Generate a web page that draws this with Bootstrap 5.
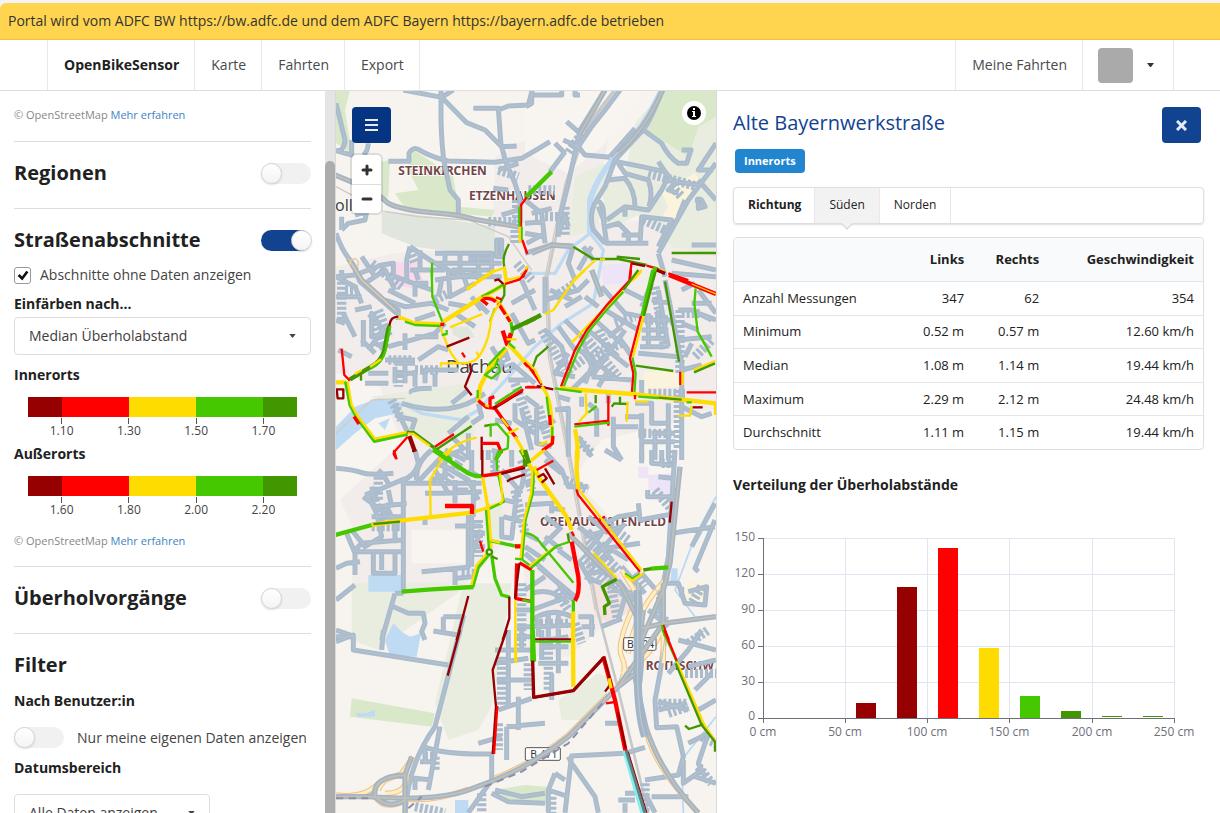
<!DOCTYPE html>
<html lang="de">
<head>
<meta charset="utf-8">
<meta name="viewport" content="width=device-width, initial-scale=1">
<title>OpenBikeSensor Portal</title>
<link href="https://cdn.jsdelivr.net/npm/bootstrap@5.3.0/dist/css/bootstrap.min.css" rel="stylesheet">
<style>
:root{--obs-blue:#114391;--line:#dededf;--ink:#212121;--c1:#960000;--c2:#ff0000;--c3:#ffdc00;--c4:#45c800;--c5:#429600}
body{font-family:"Open Sans","Noto Sans",sans-serif;font-size:14px;line-height:20px;color:var(--ink);background:#fff}
.app{height:100vh;overflow:hidden}
.top-strip{background:#f3f4f5;padding-top:3px}
.banner{background:#ffd54f;border-bottom:1px solid #fbc02d;border-top-left-radius:6px;padding:8px 8px;color:#333}
.main-nav{border-bottom:1px solid var(--line);padding:0 46px 0 47px;height:51px}
.main-nav a,.main-nav button{color:#4a4a4a;text-decoration:none;padding:0 15px 0 16px;border:0;border-left:1px solid #e8e8e9;background:none}
.main-nav .last-item{border-right:1px solid #e8e8e9}
.main-nav .brand{color:var(--ink);font-weight:700}
.main-nav .account{padding:0 18px 0 15px;gap:13px}
.avatar{width:35px;height:35px;border-radius:4px;background:#aaa}
.side-panel{width:325px;padding:12px 14px 0;overflow:hidden}
.track{width:11px;background:#e4e4e4;border-right:1px solid #d9d9d9;padding-top:70px}
.thumb{width:10px;background:#acacac;border-radius:5px 5px 0 0}
.attribution{font-size:11px;line-height:24px;color:#888}
.attribution.lower{line-height:22px;margin-top:13px}
.attribution a{color:#4183c4;text-decoration:none}
.rule{height:1px;margin:14px 0 15px;background:var(--line);border:0;opacity:1}
h2{font-size:20px;line-height:32px;font-weight:700;margin:0}
.section-row{margin-bottom:19px}
.field-title{font-size:14px;line-height:20px;font-weight:700;margin:0}
.field-title.spaced{margin-top:10px}
.field-title.tight{margin-top:6px}
.field-title.above-drop{padding-bottom:3px}
.tick-row{padding:9px 0;color:#444}
.tick-box{appearance:none;width:17px;height:17px;border:1px solid #999;border-radius:3px;margin:0 9px 0 0;background:#fff}
.tick-box:checked{background:#fff url("data:image/svg+xml,%3Csvg xmlns='http://www.w3.org/2000/svg' viewBox='0 0 16 16'%3E%3Cpath d='M3 8l4 4 6-8' fill='none' stroke='%23111' stroke-width='3'/%3E%3C/svg%3E") center/14px no-repeat}
.toggle{appearance:none;flex:none;width:50px;height:21px;border-radius:11px;background:#f1f1f1;margin:0;position:relative}
.toggle::before{content:"";position:absolute;left:0;top:0;width:21px;height:21px;border-radius:50%;border:1px solid #d4d4d5;background:linear-gradient(#fff,#f4f4f4);box-shadow:0 1px 2px #22242626}
.toggle:checked{background:var(--obs-blue)}
.toggle:checked::before{left:30px}
.toggle+label{margin-left:13px;color:#444}
.drop{appearance:none;height:38px;border:1px solid var(--line);border-radius:4px;padding:0 14px;color:#3d3d3d;background:#fff url("data:image/svg+xml,%3Csvg xmlns='http://www.w3.org/2000/svg' viewBox='0 0 8 5'%3E%3Cpath d='M0 0h8L4 5z' fill='%23444'/%3E%3C/svg%3E") right 14px center/7px 4px no-repeat}
.drop-range{width:196px}
.legend-bar{height:20px;margin:12px 14px 1px}
.legend-bar span{flex:2}
.legend-bar span:first-child,.legend-bar span:last-child{flex:1}
.scale{margin:0 14px;font-size:12px;line-height:14px;color:#444}
.scale span{flex:1;text-align:center}
.scale span::before{content:"";display:block;width:1px;height:6px;margin:0 auto;background:#555}
.k1{background:var(--c1)}.k2{background:var(--c2)}.k3{background:var(--c3)}.k4{background:var(--c4)}.k5{background:var(--c5)}
.map-pane{min-width:0;background:#f7f4ef;overflow:hidden}
.map-pane svg.map{display:block;width:100%;height:100%}
.square-btn{width:39px;height:36px;border:0;border-radius:4px;background:#053582;padding:0;display:grid;place-items:center}
.square-btn.close-btn{background:var(--obs-blue);margin-right:3px}
.map-tools{left:16px;top:16px}
.zoomer{width:29px;margin-top:12px;border-radius:4px;background:#fff;box-shadow:0 0 0 2px #0000001a}
.zoomer button{width:29px;height:29px;border:0;background:none;padding:0;display:grid;place-items:center}
.zoomer button+button{border-top:1px solid #ddd}
.info-btn{right:10px;top:10px;width:24px;height:24px;border:0;border-radius:50%;background:#fff;padding:0}
.detail{width:504px;border-left:1px solid #d9d9d9;padding:16px;overflow:hidden}
.detail h1{font-size:20px;line-height:32px;font-weight:400;color:var(--obs-blue);margin:0}
.tag{display:inline-block;background:#2185d0;color:#fff;font-size:11px;line-height:24px;font-weight:700;border-radius:4px;padding:0 9px;margin:6px 2px 14px}
.dir-menu{border:1px solid var(--line);border-radius:4px;box-shadow:0 1px 2px #22242626;height:37px;font-size:12px;margin-bottom:13px}
.dir-menu>*{display:flex;align-items:center;border:0;border-right:1px solid #e8e8e9;background:none;padding:0 14px 2px;color:#222}
.dir-menu .lead-item{font-weight:700;padding:0 13px 2px 14px}
.dir-menu .current{background:#f2f2f2;position:relative}
.current::after{content:"";position:absolute;left:50%;bottom:-5px;width:8px;height:8px;margin-left:-4px;background:#f2f2f2;border:solid #d4d4d5;border-width:0 1px 1px 0;transform:rotate(45deg)}
.stats{border:1px solid var(--line);border-radius:4px;overflow:hidden;margin-bottom:25px}
.stats table{width:100%;height:211px;font-size:13px;line-height:18px;border-collapse:separate;border-spacing:0}
.stats th,.stats td{text-align:right;padding:0 9px 1px}
.stats tbody th{text-align:left;font-weight:400}
.stats thead th{background:#f9fafb;height:43px}
.stats tbody>tr>*{border-top:1px solid #e6e6e7}
.chart{display:block;width:100%;margin-top:30px}
.chart text{font-size:12px;fill:#6e7079}
/* map drawing */
.map path,.map circle{fill:none;stroke-linejoin:round}
.map .area path{stroke:none;fill:inherit}
.street-a{stroke:#a9bbcd;stroke-width:15}
.street-b{stroke:#b7c3cc;stroke-width:3}
.comb{stroke:#a9bbcd;stroke-width:28;stroke-dasharray:9 6}
.main-a{stroke:#a4b5c6;stroke-width:16}
.main-b{stroke:#c5c0b4;stroke-width:5}
.halo{stroke:#f3bf83;stroke-width:16}
.halo-in{stroke:#fdeec4;stroke-width:10}
.dr{stroke:#960000}.rd{stroke:#f00}.ye{stroke:#ffdc00}.gr{stroke:#45c800}.dg{stroke:#429600}
.w6{stroke-width:7}.w9{stroke-width:10}.w13{stroke-width:13}
.place{font:700 36px "Noto Sans",sans-serif;fill:#744549;stroke:#fff;stroke-width:5px;paint-order:stroke}
.town{font:400 56px "Noto Sans",sans-serif;fill:#444;stroke:#fff;stroke-width:4px;paint-order:stroke}
.town.minor{font-size:48px}
.shield{font:400 31px "Noto Sans",sans-serif;fill:#333}
</style>
</head>
<body>
<div class="app d-flex flex-column">
<header class="flex-shrink-0">
  <div class="top-strip"><div class="banner">Portal wird vom ADFC BW https://bw.adfc.de und dem ADFC Bayern https://bayern.adfc.de betrieben</div></div>
  <nav class="main-nav d-flex">
    <a class="brand d-flex align-items-center" href="#">OpenBikeSensor</a>
    <a class="d-flex align-items-center" href="#">Karte</a>
    <a class="d-flex align-items-center" href="#">Fahrten</a>
    <a class="last-item d-flex align-items-center" href="#">Export</a>
    <a class="ms-auto d-flex align-items-center" href="#">Meine Fahrten</a>
    <button class="account last-item d-flex align-items-center" aria-label="Konto"><span class="avatar"></span><svg width="9" height="5" viewBox="0 0 9 5"><path d="M1 0h7L5 4H4z" fill="#333"/></svg></button>
  </nav>
</header>
<main class="d-flex flex-grow-1 overflow-hidden">
  <aside class="side-panel flex-shrink-0">
    <div class="attribution">© OpenStreetMap <a href="#">Mehr erfahren</a></div>
    <hr class="rule">
    <div class="section-row d-flex justify-content-between align-items-center"><h2><label for="t1">Regionen</label></h2><input class="toggle" type="checkbox" id="t1"></div>
    <hr class="rule">
    <div class="d-flex justify-content-between align-items-center"><h2><label for="t2">Straßenabschnitte</label></h2><input class="toggle" type="checkbox" id="t2" checked></div>
    <div class="tick-row d-flex align-items-center"><input class="tick-box" type="checkbox" id="c1" checked><label for="c1">Abschnitte ohne Daten anzeigen</label></div>
    <label class="field-title above-drop d-block" for="s1">Einfärben nach...</label>
    <select class="drop d-block w-100" id="s1"><option>Median Überholabstand</option></select>
    <h3 class="field-title spaced">Innerorts</h3>
    <div class="legend-bar d-flex"><span class="k1"></span><span class="k2"></span><span class="k3"></span><span class="k4"></span><span class="k5"></span></div>
    <div class="scale d-flex"><span>1.10</span><span>1.30</span><span>1.50</span><span>1.70</span></div>
    <h3 class="field-title tight">Außerorts</h3>
    <div class="legend-bar d-flex"><span class="k1"></span><span class="k2"></span><span class="k3"></span><span class="k4"></span><span class="k5"></span></div>
    <div class="scale d-flex"><span>1.60</span><span>1.80</span><span>2.00</span><span>2.20</span></div>
    <div class="attribution lower">© OpenStreetMap <a href="#">Mehr erfahren</a></div>
    <hr class="rule">
    <div class="section-row d-flex justify-content-between align-items-center"><h2><label for="t3">Überholvorgänge</label></h2><input class="toggle" type="checkbox" id="t3"></div>
    <hr class="rule">
    <h2>Filter</h2>
    <h3 class="field-title spaced">Nach Benutzer:in</h3>
    <div class="d-flex align-items-center mt-3"><input class="toggle" type="checkbox" id="t4"><label for="t4">Nur meine eigenen Daten anzeigen</label></div>
    <label class="field-title spaced d-block" for="s2">Datumsbereich</label>
    <select class="drop drop-range d-block mt-3" id="s2"><option>Alle Daten anzeigen</option></select>
  </aside>
  <div class="track flex-shrink-0 d-flex"><div class="thumb"></div></div>
  <section class="map-pane flex-grow-1 position-relative" aria-label="Karte">
<svg class="map" viewBox="3 3 1140 2166" preserveAspectRatio="xMidYMid slice">
<defs>
<g id="streets">
<path d="M3 40Q20 110 30 150Q28 185 3 182L50 195V150M100 160Q98 185 85 195M160 214H222V190Q235 165 258 183Q300 205 340 213L480 217 560 205 600 182 645 155M205 0L320 22 395 98 450 120 500 170 512 215 540 280 555 330V400M320 22L355 0M318 0V90Q320 170 328 220L345 300 370 330V378M415 55H490L498 165M490 60L520 48 580 45 592 0M3 430Q20 480 45 510L65 540M20 420L40 400 90 390 95 365 60 375M20 380V420M500 170L545 168M490 240L550 220M500 375L550 360M475 295L520 300M3 560L60 555 140 525 175 520V560M225 470L215 510V570M225 470L300 520 380 560M300 490H470V540M330 490V530M375 490V550M430 490V570M300 520H500M485 450H500V500H485ZM340 560H500M20 540V570M80 500L120 560M225 540H330M400 505H470M255 480V540M350 540H470"/>
<g transform="translate(570 0)"><path d="M3 50L20 40V0M20 15H110V0M150 0V15H165M240 0L165 120 130 280 100 400V440M285 0L240 60 200 110 160 170 180 195 255 202M120 185L75 245M90 160L120 190M125 95L165 130M115 150L160 170M412 0Q370 110 345 130L270 210 240 290 215 330Q190 370 205 420L240 460M330 115L255 200M355 120L410 160Q430 200 460 220H485L498 180H470M275 215L350 230 420 245 440 270M280 220L300 250 370 270Q385 310 372 350M250 270L300 265Q330 300 330 350M215 330Q240 340 235 390L245 460H370M245 390L300 350 370 360 410 300 425 270M345 460L350 380 440 390 400 470M573 160L520 240H565M573 220L490 330 400 490M520 270L573 330M420 270L520 285M460 270L430 300 460 310M245 410L280 400 310 430V460M290 435H345M400 215L430 260M520 340Q510 320 530 330L540 350 520 355ZM0 490L80 465 145 468M100 430L120 380 130 410M0 430L60 440M0 330L50 370 60 460M20 370L80 355M145 470L130 520 150 570M175 470L205 510M440 510L573 540M500 465H573M440 550L573 560M400 490L420 560M0 400L60 395M5 460L60 430M300 380V350M220 350L240 400M160 540L200 470M480 330L460 380"/></g>
<g transform="translate(0 540)"><path d="M60 0L75 35 185 130M3 20L60 50 80 100M90 40L150 0 180 60M150 90L210 110 290 100 340 120M240 80V40H280M180 20L290 60M340 0L345 80 420 40M380 0L400 60M300 30L440 10M410 80L440 120M340 100L400 110M3 80H80M110 130L150 190 110 200ZM100 240L150 170M150 270H240M160 230L300 190 330 160M180 290V340M210 270V340M180 310H240M240 300V350M90 340H160M100 310H160M230 370Q220 355 290 355M270 340V300H370M300 310V350M250 270L310 230 340 240M240 200H310M210 190V240M180 400L190 440 240 450 230 480M200 400Q330 440 420 390L450 370M430 400L440 440 410 460M400 440L340 490M470 230L500 280 480 330M510 240L520 270M360 130L420 170M420 90L460 130M530 100L600 60M560 30L600 120M530 130L580 220 600 210M540 400V450L600 490M560 420L590 540M350 400L400 360M200 450L220 490M480 450L530 460M400 490V570M350 500L390 540M330 540L390 570M460 540V570M530 280L600 340M520 330L580 330M120 220L150 235M25 130L60 200M10 240L50 260M3 150L30 160M85 150V230M60 120L110 110M190 150V120L170 110M310 80L320 30M160 60L240 100M240 0L250 30M80 210L120 250M240 150L300 130M180 280H240"/></g>
<g transform="translate(570 540)"><path d="M60 20V130M75 60L140 90M60 90L160 60 190 30M230 50L300 130 350 140M240 120L340 180M190 180L280 260M210 150L300 230 320 260M150 230L230 290 280 330M170 200L200 290 180 340M230 270L140 360M300 180L200 320M250 200L290 170M100 170L150 240M120 150L180 210M60 180L110 230 130 300M130 250L90 310 150 320M200 320L320 330M260 250L310 290M350 150H450M350 180H430M350 205H430M345 230H420M400 60L430 230M380 90L440 100M420 30L470 280V570M460 120H500L560 150M470 160L520 180M500 220L480 260M470 300L530 285M460 210L560 200M340 250L460 260M330 400H380V460H430M350 430V570M260 470H340M265 440V530L290 570M380 490H450M350 515H450M390 480V570M430 400V570M300 440H350M170 380V410M190 400L215 420V500M160 500L200 560M35 420V520L80 530M0 450L60 470M45 480L90 450M100 380L135 390M90 420L130 415V560M470 410L530 440 560 430M350 380V330M250 400V360M520 60L573 130M500 100H560M520 130L573 150M180 80L220 110M0 380L40 410M350 110L380 40M300 60L360 90M370 130V230M400 120V200M250 300L220 350M280 200L310 240M120 110L170 80M470 60L510 40"/></g>
<g transform="translate(0 1080)"><path d="M3 55Q60 60 80 68T175 70M240 0L250 40Q240 80 200 90L130 120 90 135M205 85V430M205 100H440M130 60L145 75 160 100M245 90Q240 40 290 0M245 100L320 20M120 150L110 110M100 140L125 190 140 260 90 290 50 240M110 200H200M130 170L215 160M150 160L180 220V280M200 270L80 280 60 300M60 305H200M115 310V370H180V310M140 310V360M35 250L60 310V375M3 355L35 340 75 335M3 450L60 405M180 430L140 570M180 430H205M175 470L220 490H265L270 520 260 545 270 570M295 543L370 555M325 500L385 500 370 560M325 500V550M260 365L400 352V190M360 360V405M365 385L410 380M330 90V20L380 0M330 130L440 125M370 130V120L400 120M360 160V90M400 60L430 80M410 0V70M270 200V225M360 228H440M410 200V350M400 250H450M440 240L400 330M500 200V260L530 265 545 130 560 110 570 60M505 200L560 215M510 150L550 160M500 60L560 130M530 0V50M570 100L600 90M470 0L500 10M545 530H600M540 480H590M545 560H600M480 0V60M330 50L400 90 430 150M340 70L290 90M3 560H60M160 120L170 170M300 60L340 130M300 40L360 60M85 140L150 190M415 90V200M270 130H330M420 290H450"/></g>
<g transform="translate(570 1080)"><path d="M60 5L110 60 130 110 190 110M60 30L110 70M240 0L290 30M350 0V40M380 0V40L440 45M410 0V40M400 80L440 85M368 120V140H440M340 160L345 210 450 190M450 0L430 320 415 400M440 250L570 230M570 160L500 290M570 210L510 355 520 365M425 400H460L480 460 540 465 545 410 490 425M470 410V440M190 240L260 330M210 300L345 280M200 330L300 220M180 260L290 230M170 290L250 380M200 350L260 300M230 280L310 330M190 200L250 250M190 370L270 360M160 230L200 260M0 165L80 160V190M80 175L120 180M0 290L60 330M0 310L90 390 150 440M40 350L100 400Q120 440 150 450M50 290L110 230M0 420L60 380M20 430Q80 410 130 460M20 480L130 440M20 510Q80 470 140 500M30 530L140 525M40 500V560M70 490V560M100 490V560M160 500H200V560M170 530H210M250 400L300 440 280 510 230 530M260 420L330 430M350 370L410 440V520M290 350L360 430M370 480L430 530M400 440L420 570M0 250L40 270M100 300L140 330M180 380L230 400M280 390L340 470 350 570M20 130H70M60 200L100 230M220 230L280 200 340 190M190 300L230 250M160 330L200 400M60 260L110 300"/></g>
<g transform="translate(0 1620)"><path d="M3 35L55 15V60L340 105M140 60L145 0M375 0L340 137 300 290Q220 400 210 548M315 290L280 480M265 350Q330 375 470 372V450L400 548M270 400V360M240 480V445L290 450M255 395H295M490 240L590 205M550 200V300M515 290L630 280M515 290V390M430 340L500 320M480 100L580 85M485 150H590M520 0V230M560 0V60M620 50H700M610 100H700M650 130V210M640 30L700 20M480 480L560 500 630 490M470 490L520 515 630 520M660 430L690 450M700 380L710 400 780 500 790 548M640 480V548M660 430L640 480 700 500M710 375L690 548M705 378L870 370 930 352M810 280H850M930 450L1030 435 1045 380 1025 290 965 293 960 210 975 130 990 20M1045 390V460L1100 420M1060 340L1120 310M1120 310L1090 400 1110 440M1080 440L1143 460M950 500H1060M870 490H900M850 510H900M870 520V548M970 215L1060 240M970 240L1050 220M1080 180L1130 130M1090 240L1143 210M1000 130L1060 60 1100 0M1030 30L1143 60M1060 110L1143 90M930 490L960 548M3 0L60 20M120 470L100 500M480 60H590M620 0V90M670 0V130"/></g>
</g>
<g id="mainroads">
<path d="M0 255L60 280Q130 310 160 340Q200 360 290 368Q360 372 420 388L560 412M40 505L80 570 190 670M590 490L650 465 715 470M810 0L735 130M983 0Q930 120 850 190"/>
<path d="M1035 1130L1005 1420 985 1500 915 1660M700 1330L860 1490 915 1600M985 1480V1620M900 1620L985 1600 1143 1580M910 1480Q930 1700 910 1800Q930 2000 1090 2169M985 1600L850 1790M3 2120H100Q300 2135 400 2100L480 2070Q600 2020 700 1940L850 1790 915 1740M120 2120Q110 2060 210 2055L230 2000M210 2055V2169M120 2120Q160 2160 210 2130M925 1560L900 1760 930 1900M770 540L800 620"/>
</g>
</defs>
<g class="area" fill="#f2edea"><path d="M3 530L170 490 470 470 480 200 620 120 690 0H850L770 400 1143 380V960L1020 980 940 1200 930 1500 700 1700H580L560 1300 380 1500H50L60 1330 3 1200Z"/></g>
<g class="area" fill="#f8f5f0"><path d="M570 60L700 0H940L800 170 700 250 570 190ZM3 850L130 880 200 1060 3 1240ZM700 1180L800 1050 1020 1000V1460L880 1440 840 1300 730 1180ZM230 1320H390V1420H230ZM410 1480L530 1450 520 1560 400 1570Z"/></g>
<g class="area" fill="#e9ede0"><path d="M985 0H1143V500L1010 470 860 300 900 100ZM720 260L810 220 790 420 700 440ZM790 240L980 300 960 350 820 420ZM50 1480H530L470 1850 430 1920 340 1950 300 1840 380 1500 130 1680 50 1650ZM670 1830L790 1750 840 1770 760 1890 680 1890ZM110 920L390 880 420 1040 260 1060 200 990ZM470 1240H500V1350H460Z"/></g>
<g class="area" fill="#d8e8c9"><path d="M3 0H45L30 60 50 190 3 160ZM985 0H1143V80L1090 110 1060 200 920 110ZM140 215L165 210 160 320 140 330ZM235 180L290 215 355 260 370 350 480 360 470 380 210 355 180 310 250 300 220 240ZM50 1825L300 1870 290 1910 45 1880ZM480 2100L570 2085 635 2090V2145L520 2130Z"/></g>
<g class="area" fill="#e0e5dd"><path d="M140 360L290 380 480 410V490L420 495 240 470 140 430ZM350 710H400L420 740 390 750 355 735Z"/></g>
<g class="area" fill="#fbd8ea"><path d="M180 515H255V545L275 600 170 585Z"/></g>
<g class="area" fill="#ede5f7"><path d="M800 525L880 520V580L805 585ZM910 1130H940V1165H910ZM940 1155L1010 1150V1215L940 1200Z"/></g>
<g class="area" fill="#fbf3dc"><path d="M1080 250L1100 280 1020 390 980 380 1000 350 980 310 1040 270ZM930 845L1035 840V890L915 900ZM1060 1470L1120 1480V1540L1050 1530Z"/></g>
<g class="area" fill="#f4e2de"><path d="M770 1480L850 1450 890 1560 830 1600 780 1580Z"/></g>
<g class="area" fill="#bfdbf3"><path d="M100 1455H205V1505H100ZM175 1600L200 1625 225 1640 258 1630 245 1700 165 1700 150 1650ZM3 1010L60 950 130 925 210 940 190 970 120 985 60 1030 3 1080ZM60 1870H90L120 1860V1880L70 1880ZM360 2130H400V2169H360ZM1010 1435H1028V1480H1005ZM130 1000L165 985 150 1020Z"/></g>
<path d="M980 0Q930 110 860 180T765 330V430" stroke="#bfdbf3" stroke-width="18"/>
<path d="M765 430L805 480 775 640 680 700 600 770 530 850 430 960 380 990 260 970 200 940M570 550H660L700 480 765 430" stroke="#bfdbf3" stroke-width="10"/>
<path d="M1143 1220L1080 1340 1020 1500 1080 1580M1143 1880L1040 2010 1045 2169" stroke="#b8d7f3" stroke-width="5"/>
<path d="M835 0L750 110 690 280 630 560 640 800 700 1110 780 1560M150 365L250 380 400 390 520 440 590 540M3 290L60 320M110 930L210 925M3 1030L110 930" stroke="#cfcac4" stroke-width="4"/>
<path d="M840 0L757 110 697 280 637 560 647 800 707 1110 787 1560 850 1800 940 2169" stroke="#c8c8c8" stroke-width="8"/>
<text class="place" x="190" y="255">STEINKIRCHEN</text>
<text class="place" x="402" y="331">ETZENHAUSEN</text>
<text class="town" x="333" y="848">Dachau</text>
<text class="town minor" x="0" y="364">olln</text>
<text class="place" x="615" y="1307">OBERAUGUSTENFELD</text>
<text class="place" x="932" y="1740">ROTHSCHW</text>
<g class="comb">
<path d="M460 395H560M490 240L550 260M545 330V460M580 300H660M600 380H700M690 350V440M940 250L1090 290M1010 290L1040 320M925 390L990 420M740 130L700 190M540 420V460"/>
<path d="M20 560V700M30 600H70M110 670L150 780M130 660L160 740M110 520L200 590M160 810H230M190 840V890M225 480L240 520M500 780L530 850M545 520L590 570M540 880L590 1020M240 840H310M170 930L200 990M300 630L340 610"/>
<path d="M960 590L990 780M1035 660V850M930 690H1010M770 800L860 760M750 740L850 860M700 840L770 790M840 700L900 680M940 910H1050M1030 900V1080M730 1050L770 1090M910 1030H1010M790 720L830 800M620 720L690 840M610 950L640 1050M1040 670H1100M1080 800L1130 750M660 620L720 580"/>
<path d="M130 1160V1230M150 1250V1310M110 1310H200M430 1290V1400M540 1200L570 1330M110 1200L140 1300M560 1480V1690M600 1600H700M640 1640V1800M500 1700V1850M580 1720V1800M380 1450H420M480 1110V1160M390 1090L330 1180M560 1110L590 1200"/>
<path d="M740 1400L840 1500M760 1350L850 1440M800 1290L880 1350M830 1500L850 1600M980 1120H1010V1080M1100 1490L1070 1540M970 1560L1000 1610M960 1200L1020 1270M900 1450L930 1490M690 1170L760 1200M660 1500L700 1560M720 1600L740 1660"/>
<path d="M970 1840H1060M1000 1870L1060 1850M1060 1660L1120 1620M1050 1750H1143M270 2000H300V2040M440 2110V2169M650 2120V2169M490 1900V1980M240 2150L330 2169M1090 2030L1130 2080M930 2080V2169M1100 1940L1143 1960"/>
</g>
<use href="#streets" class="street-a"/>
<g class="halo"><path id="ramps" d="M850 1790Q880 1740 860 1700T910 1520L860 1440M1000 1460Q900 1560 880 1690M985 1600Q960 1700 860 1750M985 1720V1620M930 1900Q940 2010 1090 2169M3 2115Q90 2125 130 2080L200 2050 235 2000M130 2100Q150 2050 215 2060Q215 2110 150 2110M120 2120Q150 2165 215 2130M480 2065Q600 2015 700 1935L820 1815M215 2128Q300 2135 400 2098"/></g>
<use href="#ramps" class="halo-in"/>
<use href="#streets" class="street-b"/>
<g fill="#fff" stroke="#555" stroke-width="3"><rect x="866" y="1643" width="97" height="38" rx="4"/><rect x="571" y="1973" width="105" height="38" rx="4"/></g>
<text class="shield" x="876" y="1673">B 304</text><text class="shield" x="586" y="2003">B 471</text>
<use href="#mainroads" class="main-a"/><use href="#mainroads" class="main-b"/>
<path d="M40 505L80 570 180 660M45 525A13 13 0 1 1 65 530" stroke="#e7c99f" stroke-width="4"/>
<path d="M908 1500V1700Q905 1860 930 1940" stroke="#a3b4c6" stroke-width="24"/>
<path d="M908 1480V1700Q905 1860 930 1940" stroke="#bac5ce" stroke-width="4"/>
<path d="M450 2090L560 2045 700 1960 810 1830M220 2155L260 2120M3 2125H100" stroke="#8f8da3" stroke-width="6" stroke-dasharray="22 16"/>

<!-- measured segments, one group per map tile -->
<g>
<path class="gr w13" d="M572 322L650 245"/>
<path class="rd w6" d="M575 322L558 345V410"/><path class="gr w6" d="M553 350V410M560 410V450"/><path class="ye w6" d="M554 410V458"/>
<path class="rd w6" d="M562 450L577 492M577 530L565 560 545 570"/><path class="dg w6" d="M522 462Q500 500 508 530"/>
<path class="ye w6" d="M430 570L475 545 510 533 515 570 560 560 578 528"/><path class="gr w6" d="M291 518V560"/>
</g>
<g transform="translate(570 0)">
<path class="dg w6" d="M145 470L205 507 280 507 365 525M275 500L345 507M440 489H573"/><path class="ye w6" d="M212 510L145 570M348 545L325 570"/>
<path class="rd w6" d="M320 515L313 570M365 527L395 535M430 550L490 570"/><path class="dr w6" d="M320 520L360 528M395 535L420 550"/><path class="ye w6" d="M400 537L420 545M225 508H240"/><path class="gr w13" d="M392 530L382 570"/>
</g>
<g transform="translate(0 540)">
<path class="gr w6" d="M290 0L292 80 322 155"/><path class="ye w9" d="M480 0L395 58M508 0L515 40"/><path class="ye w13" d="M512 42L440 82 325 155"/>
<path class="rd w6" d="M510 42L555 28 575 0"/><path class="gr w6" d="M440 80L470 65 508 42M465 155L480 115"/><path class="dg w6" d="M508 45V75L495 100"/><path class="dr w6" d="M478 32L490 28 505 42"/>
<path class="ye w9" d="M445 82Q475 75 500 110L528 155"/><path class="rd w9" d="M438 88L458 104M445 86Q475 80 495 108L525 155" stroke-dasharray="40 8"/><path class="rd w6" d="M483 82L500 88"/>
<path class="gr w9" d="M528 155L532 185 520 220"/><path class="rd w13" d="M503 182L516 222 528 190"/>
<path class="ye w6" d="M495 100Q467 130 465 175 455 230 430 262 405 285 370 278 345 250 338 228L315 170M345 172L442 132M318 290V280H370M425 245L432 262M515 208H545"/>
<path class="ye w9" d="M190 140L235 158 322 162"/><path class="gr w6" d="M210 155L240 165 318 168M320 195L335 192V180"/><path class="rd w9" d="M316 163H328"/>
<path class="dr w6" d="M163 168Q165 140 190 140M335 230L403 203M405 280L408 305 390 350 410 376M5 358H25V385H8Z"/>
<path class="dg w13" d="M162 168L148 240Q140 275 105 292L45 328"/><path class="gr w6" d="M166 168L152 240Q144 278 107 296"/><path class="ye w6" d="M138 268L105 290M80 300L60 312"/><path class="dg w6" d="M78 308V332"/>
<path class="rd w6" d="M20 236L28 315 45 332M381 248L390 262"/>
<path class="ye w13" d="M3 337H34"/><path class="gr w9" d="M32 335L45 405 65 442 118 514 218 492"/><path class="ye w6" d="M38 335L50 405 68 438 120 506 218 486"/><path class="rd w9" d="M57 440L72 462"/>
<path class="ye w13" d="M515 235L465 290 435 350 430 395"/><path class="gr w6" d="M510 232L460 285M428 360V385M490 265L480 290 450 315 470 325 495 305 490 285"/>
<path class="rd w9" d="M430 392L455 412 480 415 530 485 545 505M465 412V385L478 380"/><path class="ye w6" d="M450 405L462 410M500 445L520 470M515 492L550 475"/><path class="ye w9" d="M540 500L570 550"/><path class="gr w13" d="M568 550L578 570"/>
<path class="dr w9" d="M475 415L562 362"/><path class="gr w6" d="M480 402L560 350"/><path class="rd w6" d="M485 408L565 358M575 351H600"/><path class="dg w13" d="M530 178L600 145"/>
<path class="ye w13" d="M520 222L600 310"/><path class="rd w9" d="M568 278L580 290M590 298L600 310"/><path class="gr w6" d="M520 218L540 235"/>
<path class="dg w9" d="M215 487L235 487 300 535"/><path class="ye w6" d="M218 490L235 492 285 528"/><path class="gr w13" d="M295 535L350 570"/><path class="dr w13" d="M223 498L240 545"/><path class="rd w6" d="M218 500L178 545 185 568M300 530L357 492"/>
<path class="dg w6" d="M305 538L410 468M448 468L470 464"/><path class="ye w6" d="M310 570Q360 515 425 503"/><path class="dr w6" d="M440 500V570"/><path class="rd w9" d="M440 520H488L500 550"/><path class="gr w6" d="M467 500V465L487 462 520 500 518 535 490 545 480 570"/>
</g>
<g transform="translate(570 540)">
<path class="ye w6" d="M350 0L250 105 190 165 140 218M180 0L140 40 85 120 60 132"/><path class="rd w6" d="M318 0L315 30 250 100 185 180 150 240 108 350"/><path class="gr w6" d="M295 65L240 125 190 185 158 245 116 350"/><path class="dg w6" d="M340 0L295 60"/>
<path class="dg w13" d="M48 135L0 160"/><path class="dg w6" d="M22 295L35 260 70 230"/>
<path class="gr w13" d="M385 0L352 138"/><path class="dg w6" d="M391 5L357 138M420 35L462 275M332 287L445 303"/><path class="rd w6" d="M348 138L315 265 325 310 320 378"/><path class="ye w6" d="M356 138L324 260"/><path class="gr w6" d="M322 262L332 310 328 372"/>
<path class="dr w9" d="M395 0L420 10"/><path class="rd w13" d="M432 15L573 72"/><path class="ye" stroke-width="4" d="M500 42L573 72"/>
<path class="gr w6" d="M512 55L508 100 518 185 560 260"/><path class="ye w6" d="M505 300L570 273"/><path class="dg w6" d="M507 307L570 280"/>
<path class="rd w6" d="M466 305V345M485 367H573M250 378V467"/><path class="ye w6" d="M473 305V345"/>
<path class="ye w13" d="M105 355L320 372 573 400"/><path class="gr w6" d="M90 355L170 366M340 380L400 384M485 397H500"/><path class="dg w6" d="M400 383L470 389"/><path class="rd w6" d="M0 352H60M5 280L50 345M330 375V388"/><path class="dr w6" d="M35 348L85 358"/><path class="ye w6" d="M0 270L30 300 50 340"/>
<path class="ye w9" d="M50 350Q78 380 80 450T80 520L20 570"/><path class="gr w6" d="M65 380L72 440M82 470V510"/><path class="rd w9" d="M74 435L76 465M84 498L82 520 52 542"/><path class="ye w6" d="M42 525L68 513"/>
<path class="rd w6" d="M148 463L252 452"/><path class="gr w6" d="M148 470L255 458M190 428L215 408"/><path class="dg w6" d="M212 375V400M260 410L268 400 310 402M285 380V405"/><path class="ye w6" d="M182 370L185 430 162 455M308 395L305 455M330 395H370M460 437H495L500 408M570 400V435"/><path class="ye w13" d="M150 478Q160 520 157 570"/><path class="dr w6" d="M503 412H533"/>
</g>
<g transform="translate(0 1080)">
<path class="gr w13" d="M0 255L110 225"/><path class="ye w13" d="M110 225L195 212 410 188"/><path class="dg w6" d="M115 222L195 215"/><path class="ye w9" d="M410 188L500 160"/>
<path class="ye w6" d="M350 0L320 30 285 90 287 205"/><path class="gr w13" d="M295 0L400 70Q420 80 443 78"/><path class="dr w6" d="M442 0V78"/><path class="rd w9" d="M440 78L495 70 570 50"/><path class="dr w6" d="M495 72L570 54M516 95L525 88 570 73M235 0V6"/>
<path class="gr w6" d="M500 5L485 30 487 62M490 75L507 155 460 178"/><path class="ye w6" d="M495 70L503 150 495 162"/><path class="ye w9" d="M443 82L460 180 468 295"/><path class="gr w6" d="M453 180L462 300"/>
<path class="rd w13" d="M330 168H411V192"/><path class="rd w6" d="M178 0L176 12 183 25M435 273L440 290 445 305"/>
<path class="gr w9" d="M465 272L540 288"/><path class="ye w6" d="M465 270L495 278"/><path class="rd w13" d="M540 289H567"/>
<path class="gr w9" d="M463 312L430 352 413 412"/><path class="gr w13" d="M415 411L290 418 200 425"/><path class="ye w6" d="M458 308L425 345 409 405"/><circle class="dg w6" cx="463" cy="306" r="8"/><path class="gr w9" d="M470 315L480 385 500 435 525 442"/><path class="dg w6" d="M470 320L488 327"/>
<path class="dr w6" d="M400 438L365 570M523 440V505L503 570"/><path class="gr w9" d="M555 0L595 65 592 130 570 210 560 330"/><path class="ye w6" d="M560 0L592 65 588 130 567 210 556 330"/>
<path class="dg w13" d="M570 15V50"/><path class="rd w9" d="M553 338L590 360M545 340L542 445 592 455"/><path class="dr w6" d="M553 340L540 445"/><path class="gr w6" d="M540 326L560 328 590 350M562 450L592 456"/><path class="ye w6" d="M541 450V638"/><path class="gr w13" d="M592 360V635"/>
</g>
<g transform="translate(570 1080)">
<path class="ye w13" d="M156 0L155 60 160 120M28 50L40 80 125 200 140 240"/><path class="rd w6" d="M154 118L160 135 345 365M35 60L85 32M140 245L147 258M230 205L240 200"/><path class="ye w6" d="M164 122L350 360M60 0L10 40 25 60M0 20L20 50"/>
<path class="gr w6" d="M300 370L322 386 345 372M0 250Q20 250 35 265L145 398"/><path class="ye w6" d="M300 376L322 392 355 370M12 350L90 290"/><path class="dg w9" d="M355 360L380 356"/><path class="gr w13" d="M378 356L430 352"/><path class="gr w6" d="M18 354L95 288 135 275"/>
<path class="dr w6" d="M440 155L434 218M60 55L88 103M38 82L55 72 65 85 50 98"/><path class="rd w13" d="M140 275L160 380Q165 430 150 452"/><path class="dg w6" d="M128 250L132 275"/><path class="gr w9" d="M145 450V485"/><path class="ye w6" d="M205 308L275 385"/>
<path class="dg w9" d="M275 388L232 410 253 460 238 470 240 495"/><path class="rd w9" d="M413 525L430 570"/><path class="gr w6" d="M410 525L420 560"/><path class="dg w13" d="M0 0L12 40"/>
</g>
<g transform="translate(0 1620)">
<path class="dr w6" d="M375 0L338 137M515 0L473 120 483 230 473 372M592 28H708"/><path class="rd w6" d="M487 228L477 372"/><path class="ye w6" d="M541 0L543 98"/><path class="gr w13" d="M593 0L597 95"/><path class="gr w6" d="M592 35H708"/><path class="ye w13" d="M714 -55L715 170"/>
<path class="dr w9" d="M593 92L596 202 715 182 807 82"/><path class="rd w13" d="M805 80L840 210 872 365"/><path class="dr w6" d="M600 202L715 182 807 82 828 160M848 245L872 355M825 165L810 185"/><path class="ye w9" d="M822 145L828 175"/><path class="rd w6" d="M813 220L840 216"/>
<path stroke="#7ff0f0" stroke-width="8" d="M866 362L920 549"/><path stroke="#5d8588" stroke-width="10" d="M874 362L930 549"/><path class="dr" stroke-width="3" d="M880 365L936 549"/>
<path class="gr w6" d="M983 0L1030 105"/><path class="rd w6" d="M988 0L1025 92"/><path class="ye w6" d="M1025 95L1108 285 1143 335"/><path class="dg w6" d="M1022 100L1100 285 1140 335V365M1050 287L1062 297 1105 283"/>
</g>
</svg>
    <div class="map-tools position-absolute">
      <button class="square-btn" aria-label="Menü"><svg width="13" height="12" viewBox="0 0 13 12"><path d="M0 1h13M0 6h13M0 11h13" stroke="#e6ebf3" stroke-width="2"/></svg></button>
      <div class="zoomer"><button aria-label="Vergrößern"><svg width="12" height="12" viewBox="0 0 12 12"><path d="M6 2v8M2 6h8" stroke="#333" stroke-width="3" stroke-linecap="round"/></svg></button><button aria-label="Verkleinern"><svg width="12" height="12" viewBox="0 0 12 12"><path d="M2 6h8" stroke="#333" stroke-width="3" stroke-linecap="round"/></svg></button></div>
    </div>
    <button class="info-btn position-absolute" aria-label="Information"><svg class="d-block" width="24" height="24" viewBox="0 0 24 24"><circle cx="12" cy="12" r="7" fill="#000"/><path d="M11 7h2v2h-2zM10 10h3v5h1v1h-4v-1h1v-4h-1z" fill="#fff"/></svg></button>
  </section>
  <section class="detail flex-shrink-0">
    <div class="d-flex justify-content-between align-items-start"><h1>Alte Bayernwerkstraße</h1><button class="square-btn close-btn" aria-label="Schließen"><svg width="11" height="11" viewBox="0 0 11 11"><path d="M1 1l9 9M10 1l-9 9" stroke="#e7ecf4" stroke-width="3"/></svg></button></div>
    <div><span class="tag">Innerorts</span></div>
    <div class="dir-menu d-flex"><div class="lead-item">Richtung</div><button class="current">Süden</button><button>Norden</button></div>
    <div class="stats"><table>
      <colgroup><col style="width:35%"><col style="width:16%"><col style="width:16%"><col></colgroup>
      <thead><tr><th></th><th>Links</th><th>Rechts</th><th>Geschwindigkeit</th></tr></thead>
      <tbody>
      <tr><th>Anzahl Messungen</th><td>347</td><td>62</td><td>354</td></tr>
      <tr><th>Minimum</th><td>0.52 m</td><td>0.57 m</td><td>12.60 km/h</td></tr>
      <tr><th>Median</th><td>1.08 m</td><td>1.14 m</td><td>19.44 km/h</td></tr>
      <tr><th>Maximum</th><td>2.29 m</td><td>2.12 m</td><td>24.48 km/h</td></tr>
      <tr><th>Durchschnitt</th><td>1.11 m</td><td>1.15 m</td><td>19.44 km/h</td></tr>
      </tbody></table></div>
    <h3 class="field-title">Verteilung der Überholabstände</h3>
    <svg class="chart" viewBox="0 0 471 220" shape-rendering="crispEdges">
      <path d="M30 13H441M30 49H441M30 85H441M30 121H441M30 157H441M112 13V193M194 13V193M276 13V193M359 13V193M441 13V193" stroke="#e0e6f1" fill="none"/>
      <path d="M30 13V193H441M25 13H30M25 49H30M25 85H30M25 121H30M25 157H30M25 193H30M30 193V198M112 193V198M194 193V198M276 193V198M359 193V198M441 193V198" stroke="#6e7079" fill="none"/>
      <path d="M123 178h20v15h-20zM164 62h20v131h-20z" fill="#960000"/><path d="M205 23h20v170h-20z" fill="#f00"/><path d="M246 123h20v70h-20z" fill="#ffdc00"/><path d="M287 171h20v22h-20z" fill="#45c800"/><path d="M328 186h20v7h-20zM369 191h20v1h-20zM410 191h20v1h-20z" fill="#429600"/>
      <g text-anchor="end"><text x="22" y="16">150</text><text x="22" y="52">120</text><text x="22" y="88">90</text><text x="22" y="124">60</text><text x="22" y="160">30</text><text x="22" y="195">0</text></g>
      <g text-anchor="middle"><text x="30" y="211">0 cm</text><text x="112" y="211">50 cm</text><text x="194" y="211">100 cm</text><text x="276" y="211">150 cm</text><text x="359" y="211">200 cm</text><text x="441" y="211">250 cm</text></g>
    </svg>
  </section>
</main>
</div>
<script src="https://cdn.jsdelivr.net/npm/bootstrap@5.3.0/dist/js/bootstrap.bundle.min.js"></script>
</body>
</html>
